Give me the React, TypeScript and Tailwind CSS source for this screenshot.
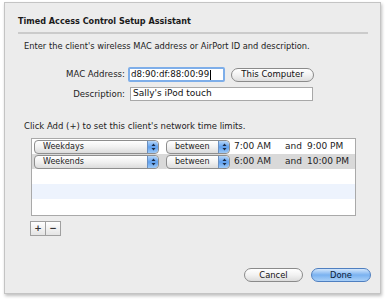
import React from "react";

const font = { fontFamily: '"DejaVu Sans", "Liberation Sans", sans-serif' };

function Stepper() {
  return (
    <div className="w-[11px] h-full rounded-r-[4px] bg-gradient-to-b from-[#b6d6f8] via-[#5fa0ee] to-[#9cc8f6] border-l border-[#6a8fc0] flex items-center justify-center">
      <svg width="5" height="8" viewBox="0 0 5 8">
        <path d="M2.5 0.5 L4.5 3 L0.5 3 Z" fill="#1b2a44" />
        <path d="M2.5 7.5 L4.5 5 L0.5 5 Z" fill="#1b2a44" />
      </svg>
    </div>
  );
}

function Popup({ label, w }: { label: string; w: string }) {
  return (
    <div
      className={`${w} h-[14px] flex items-stretch rounded-[4px] border border-[#8e8e8e] bg-gradient-to-b from-white via-[#f1f1f1] to-[#dcdcdc] overflow-hidden shadow-[0_1px_0_rgba(255,255,255,0.6)]`}
    >
      <div className="flex-1 pl-[8px] text-[8px] leading-[12px] text-[#222]">{label}</div>
      <Stepper />
    </div>
  );
}

function Row({ day, start, end, bg }: { day: string; start: string; end: string; bg: string }) {
  return (
    <div className={`h-[15px] flex items-center ${bg}`}>
      <div className="ml-[2px]">
        <Popup label={day} w="w-[125px]" />
      </div>
      <div className="ml-[7px]">
        <Popup label="between" w="w-[64px]" />
      </div>
      <div className="ml-[4px] w-[51px] text-[9px] text-[#222]">{start}</div>
      <div className="w-[22px] text-[9px] text-[#222]">and</div>
      <div className="text-[9px] text-[#222]">{end}</div>
    </div>
  );
}

export default function App() {
  return (
    <div className="w-[386px] h-[302px] bg-white pt-[2px] pl-[4px]" style={font}>
      <div className="w-[377px] h-[292px] bg-[#ececec] border border-[#c4c4c4] shadow-[1px_2px_3px_rgba(0,0,0,0.25)] flex flex-col">
        <div className="mt-[12px] pl-[13px] h-[12px] leading-[12px] text-[8.1px] font-bold text-[#1a1a1a]">
          Timed Access Control Setup Assistant
        </div>
        <div className="mt-[5px] ml-[13px] w-[350px] h-[2px] bg-[#cbcbcb]" />
        <div className="mt-[6px] pl-[19px] h-[12px] leading-[12px] text-[8.3px] text-[#222]">
          Enter the client's wireless MAC address or AirPort ID and description.
        </div>
        <div className="mt-[15px] flex items-center h-[15px]">
          <div className="w-[120px] text-right text-[8.6px] text-[#222]">MAC Address:</div>
          <div className="ml-[3px] w-[97px] h-[15px] border-[2px] border-[#7eaee9] rounded-[2px] bg-white flex items-center pl-[1px] text-[8.7px] text-[#111]">
            d8:90:df:88:00:99<span className="ml-[1px] w-[1px] h-[10px] bg-black" />
          </div>
          <div className="ml-[6px] w-[83px] h-[14px] rounded-full border border-[#8a8a8a] bg-gradient-to-b from-white via-[#f2f2f2] to-[#dedede] flex items-center justify-center text-[8.5px] text-[#111]">
            This Computer
          </div>
        </div>
        <div className="mt-[5px] flex items-center h-[14px]">
          <div className="w-[120px] text-right text-[8.6px] text-[#222]">Description:</div>
          <div className="ml-[5px] w-[183px] h-[14px] border border-[#a8a8a8] bg-white flex items-center pl-[2px] text-[9px] text-[#111]">
            Sally's iPod touch
          </div>
        </div>
        <div className="mt-[19px] pl-[19px] h-[12px] leading-[12px] text-[8.5px] text-[#222]">
          Click Add (+) to set this client's network time limits.
        </div>
        <div className="mt-[6px] ml-[26px] w-[325px] h-[78px] border border-[#a9a9a9] bg-white flex flex-col">
          <Row day="Weekdays" start="7:00 AM" end="9:00 PM" bg="bg-white" />
          <Row day="Weekends" start="6:00 AM" end="10:00 PM" bg="bg-[#d9d9d9]" />
          <div className="h-[15px] bg-white" />
          <div className="h-[15px] bg-[#edf3fd]" />
          <div className="flex-1 bg-white" />
        </div>
        <div className="mt-[5px] ml-[25px] flex">
          <div className="w-[16px] h-[15px] border border-[#a0a0a0] bg-gradient-to-b from-white to-[#e4e4e4] flex items-center justify-center text-[9px] font-bold text-[#333] leading-none">
            +
          </div>
          <div className="w-[15px] h-[15px] border border-l-0 border-[#a0a0a0] bg-gradient-to-b from-white to-[#e4e4e4] flex items-center justify-center text-[9px] font-bold text-[#333] leading-none">
            −
          </div>
        </div>
        <div className="mt-[32px] flex justify-end pr-[9px] gap-[8px]">
          <div className="w-[59px] h-[14px] rounded-full border border-[#8a8a8a] bg-gradient-to-b from-white via-[#f2f2f2] to-[#dcdcdc] flex items-center justify-center text-[8.4px] text-[#111]">
            Cancel
          </div>
          <div className="w-[60px] h-[14px] rounded-full border border-[#4f7fc0] bg-gradient-to-b from-[#d3e6fb] via-[#7ab2f0] to-[#a9d0f8] flex items-center justify-center text-[8.4px] text-[#0b1a33]">
            Done
          </div>
        </div>
      </div>
    </div>
  );
}
